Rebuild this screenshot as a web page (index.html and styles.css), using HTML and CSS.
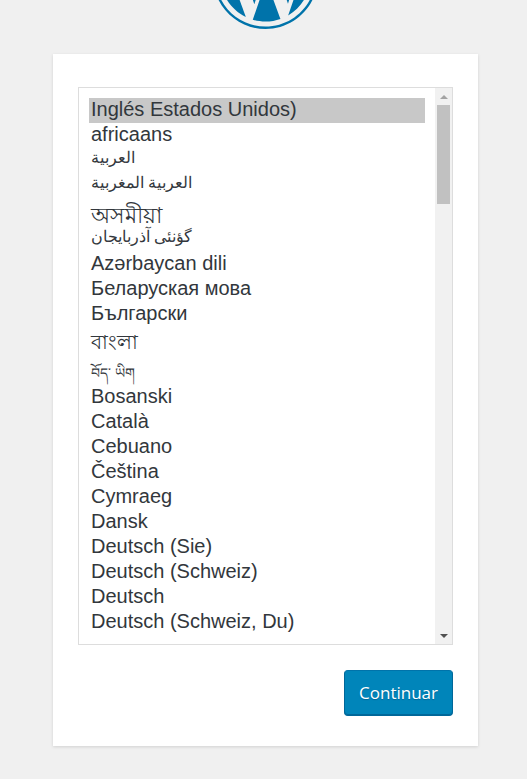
FILE: index.html
```
<!DOCTYPE html>
<html lang="es">
<head>
    <meta charset="utf-8">
    <meta name="viewport" content="width=device-width, initial-scale=1">
    <title>WordPress</title>
    <link rel="stylesheet" href="styles.css">
</head>
<body>
    <div class="logo">
        <svg viewBox="0 0 122.52 122.523" role="img" aria-label="WordPress">
            <path d="M8.708,61.26c0,20.802,12.089,38.779,29.619,47.298L13.258,39.872C10.342,46.408,8.708,53.641,8.708,61.26z"/>
            <path d="M96.74,58.608c0-6.495-2.333-10.993-4.334-14.494c-2.664-4.329-5.161-7.995-5.161-12.324c0-4.831,3.664-9.328,8.825-9.328c0.233,0,0.454,0.029,0.681,0.042c-9.35-8.566-21.807-13.796-35.489-13.796c-18.36,0-34.513,9.42-43.91,23.688c1.233,0.037,2.395,0.063,3.382,0.063c5.497,0,14.006-0.667,14.006-0.667c2.833-0.167,3.167,3.994,0.337,4.329c0,0-2.847,0.335-6.015,0.501L48.2,93.547l11.501-34.493l-8.188-22.434c-2.83-0.166-5.511-0.501-5.511-0.501c-2.832-0.166-2.5-4.496,0.332-4.329c0,0,8.679,0.667,13.843,0.667c5.496,0,14.006-0.667,14.006-0.667c2.835-0.167,3.168,3.994,0.337,4.329c0,0-2.853,0.335-6.015,0.501l18.992,56.494l5.242-17.517C95.011,68.328,96.74,63.056,96.74,58.608z"/>
            <path d="M62.184,65.857l-15.768,45.819c4.708,1.384,9.687,2.141,14.846,2.141c6.12,0,11.989-1.058,17.452-2.979c-0.141-0.225-0.269-0.464-0.374-0.724L62.184,65.857z"/>
            <path d="M107.376,36.046c0.226,1.674,0.354,3.471,0.354,5.404c0,5.333-0.996,11.328-3.996,18.824l-16.053,46.413c15.624-9.111,26.133-26.038,26.133-45.426C113.815,52.124,111.481,43.532,107.376,36.046z"/>
            <path d="M61.262,0C27.483,0,0,27.481,0,61.26c0,33.783,27.483,61.263,61.262,61.263c33.778,0,61.265-27.48,61.265-61.263C122.526,27.481,95.04,0,61.262,0z M61.262,119.715c-32.23,0-58.453-26.223-58.453-58.455c0-32.23,26.222-58.451,58.453-58.451c32.229,0,58.45,26.221,58.45,58.451C119.712,93.492,93.491,119.715,61.262,119.715z"/>
        </svg>
    </div>

    <form class="setup" method="post">
        <div class="language-box">
            <select class="language-list" name="language" size="21" aria-label="Idioma">
                <option value="" lang="en" selected>Inglés Estados Unidos)</option>
                <option value="af" lang="af">africaans</option>
                <option value="ar" lang="ar" class="arabic">العربية</option>
                <option value="ary" lang="ar" class="arabic">العربية المغربية</option>
                <option value="as" lang="as" class="assamese">অসমীয়া</option>
                <option value="azb" lang="az" class="arabic">گؤنئی آذربایجان</option>
                <option value="az" lang="az">Azərbaycan dili</option>
                <option value="bel" lang="be">Беларуская мова</option>
                <option value="bg_BG" lang="bg">Български</option>
                <option value="bn_BD" lang="bn" class="bengali">বাংলা</option>
                <option value="bo" lang="bo" class="tibetan">བོད་ ཡིག</option>
                <option value="bs_BA" lang="bs">Bosanski</option>
                <option value="ca" lang="ca">Català</option>
                <option value="ceb" lang="ceb">Cebuano</option>
                <option value="cs_CZ" lang="cs">Čeština</option>
                <option value="cy" lang="cy">Cymraeg</option>
                <option value="da_DK" lang="da">Dansk</option>
                <option value="de_DE_formal" lang="de">Deutsch (Sie)</option>
                <option value="de_CH" lang="de">Deutsch (Schweiz)</option>
                <option value="de_DE" lang="de">Deutsch</option>
                <option value="de_CH_informal" lang="de">Deutsch (Schweiz, Du)</option>
            </select>
            <div class="scrollbar" aria-hidden="true">
                <svg class="arrow arrow-up" viewBox="0 0 8 4"><path d="M0 4L4 0L8 4z"/></svg>
                <div class="track"><div class="thumb"></div></div>
                <svg class="arrow" viewBox="0 0 8 4"><path d="M0 0L4 4L8 0z"/></svg>
            </div>
        </div>
        <div class="step">
            <button type="submit" class="button-primary">Continuar</button>
        </div>
    </form>
</body>
</html>
```

FILE: styles.css
```
body {
    margin: 0;
    padding: 0 49px 33px 53px;
    background: #f0f0f0;
    color: #32373c;
    font-family: "Liberation Sans", Arial, sans-serif;
}

/* the top of the logo is scrolled out of view */
.logo {
    height: 54px;
    display: flex;
    justify-content: center;
    align-items: flex-end;
    overflow: hidden;
}
.logo svg {
    flex: none;
    width: 105px;
    height: 105px;
    margin-bottom: 25px;
    fill: #0073aa;
}

.setup {
    padding: 33px 25px 30px;
    background: #fff;
    box-shadow: 0 1px 3px rgba(0, 0, 0, 0.13);
}

.language-box {
    display: flex;
    border: 1px solid #ddd;
    background: #fff;
}
.language-list {
    box-sizing: border-box;
    flex: 1;
    min-width: 0;
    height: 556px;
    margin: 0;
    padding: 10px;
    border: 0;
    border-radius: 0;
    outline: 0;
    background: #fff;
    color: #32373c;
    font-family: "Liberation Sans", Arial, "Noto Sans", sans-serif;
    font-size: 20px;
    overflow: hidden;
}
.language-list option {
    height: 25px;
    padding: 0 2px;
    line-height: 25px;
}
.language-list option:checked {
    background: #c8c8c8;
    color: #32373c;
}
.language-list .arabic {
    font-size: 16px;
    line-height: 25px;
}
.language-list .assamese {
    height: 29px;
    font-size: 22px;
    line-height: 20px;
}
.language-list .bengali {
    height: 30px;
}
.language-list .tibetan {
    height: 28px;
    font-size: 14px;
    line-height: 16px;
}

.scrollbar {
    display: flex;
    flex-direction: column;
    align-items: center;
    width: 17px;
    background: #f1f1f1;
}
.arrow {
    flex: none;
    width: 8px;
    height: 4px;
    padding: 7px 0 6px;
    fill: #505050;
}
.arrow-up {
    fill: #a3a3a3;
}
.track {
    flex: 1;
    width: 13px;
}
.thumb {
    height: 19%;
    background: #c1c1c1;
}

.step {
    margin-top: 25px;
    text-align: right;
}
.button-primary {
    height: 46px;
    padding: 0 14px 2px;
    border: 1px solid #006799;
    border-top-color: #0073aa;
    border-radius: 4px;
    background: #0085ba;
    box-shadow: inset 0 -1px 0 #006799;
    color: #fff;
    font-family: "Open Sans", "Noto Sans", sans-serif;
    font-size: 17px;
    text-shadow: 0 1px 1px #006799;
    cursor: pointer;
}
.button-primary:hover {
    background: #008ec2;
}
```
